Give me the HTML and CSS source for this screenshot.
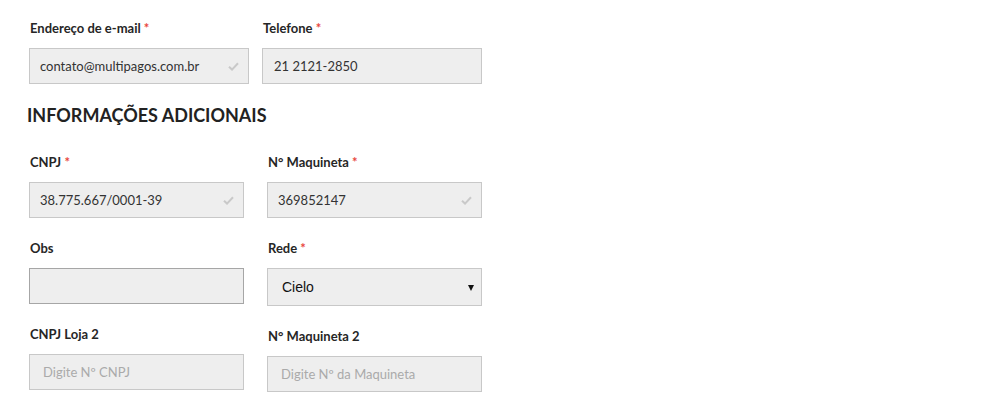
FILE: index.html
```html
<!DOCTYPE html>
<html lang="pt-BR">
<head>
<meta charset="utf-8">
<title>Formulário</title>
<link rel="stylesheet" href="styles.css">
</head>
<body>
<div class="page">
  <div class="row-top">
    <div class="field">
      <label class="lbl">Endereço de e-mail <span class="req">*</span></label>
      <div class="ctrl">
        <input class="inp" type="text" value="contato@multipagos.com.br">
        <svg class="check" width="11" height="9" viewBox="0 0 11 9"><path d="M1 4.8 L4 7.6 L10 1.2" fill="none" stroke="#c9c9c9" stroke-width="2"/></svg>
      </div>
    </div>
    <div class="field">
      <label class="lbl">Telefone <span class="req">*</span></label>
      <div class="ctrl">
        <input class="inp inp-tel" type="text" value="21 2121-2850">
      </div>
    </div>
  </div>

  <h2 class="section-title">INFORMAÇÕES ADICIONAIS</h2>

  <div class="cols">
    <div class="col">
      <div class="field">
        <label class="lbl">CNPJ <span class="req">*</span></label>
        <div class="ctrl">
          <input class="inp" type="text" value="38.775.667/0001-39">
          <svg class="check" width="11" height="9" viewBox="0 0 11 9"><path d="M1 4.8 L4 7.6 L10 1.2" fill="none" stroke="#c9c9c9" stroke-width="2"/></svg>
        </div>
      </div>
      <div class="field">
        <label class="lbl">Obs</label>
        <div class="ctrl">
          <input class="inp inp-dark" type="text" value="">
        </div>
      </div>
      <div class="field">
        <label class="lbl">CNPJ Loja 2</label>
        <div class="ctrl">
          <input class="inp inp-ph" type="text" placeholder="Digite Nº CNPJ">
        </div>
      </div>
    </div>
    <div class="col">
      <div class="field">
        <label class="lbl">N° Maquineta <span class="req">*</span></label>
        <div class="ctrl">
          <input class="inp" type="text" value="369852147">
          <svg class="check" width="11" height="9" viewBox="0 0 11 9"><path d="M1 4.8 L4 7.6 L10 1.2" fill="none" stroke="#c9c9c9" stroke-width="2"/></svg>
        </div>
      </div>
      <div class="field">
        <label class="lbl">Rede <span class="req">*</span></label>
        <div class="ctrl select-wrap">
          <select class="sel">
            <option>Cielo</option>
            <option>Rede</option>
            <option>Stone</option>
          </select>
        </div>
      </div>
      <div class="field">
        <label class="lbl">N° Maquineta 2</label>
        <div class="ctrl">
          <input class="inp inp-ph" type="text" placeholder="Digite Nº da Maquineta">
        </div>
      </div>
    </div>
  </div>
</div>
</body>
</html>
```
FILE: styles.css
```css
html, body {
  margin: 0;
  padding: 0;
  background: #fff;
}
body {
  font-family: Lato, "Liberation Sans", sans-serif;
  color: #333;
}
.page {
  padding: 18px 0 0 29px;
}
.row-top {
  display: grid;
  grid-template-columns: 220px 220px;
  column-gap: 13px;
}
.cols {
  display: grid;
  grid-template-columns: 215px 215px;
  column-gap: 23px;
  align-items: start;
}
.col {
  display: flex;
  flex-direction: column;
}
.field {
  margin-bottom: 20px;
}
.lbl {
  display: block;
  font-size: 13px;
  font-weight: 700;
  line-height: 20px;
  height: 20px;
  margin-bottom: 10px;
  color: #262626;
  padding-left: 1px;
}
.req {
  color: #e8453c;
  font-weight: 700;
}
.ctrl {
  position: relative;
}
.inp {
  display: block;
  box-sizing: border-box;
  width: 100%;
  height: 36px;
  margin: 0;
  padding: 0 10px;
  border: 1px solid #c8c8c8;
  background: #eeeeee;
  font-family: Lato, "Liberation Sans", sans-serif;
  font-size: 13px;
  color: #333;
  outline: none;
}
.inp-tel {
  padding-left: 11px;
}
.inp-ph {
  padding-left: 13px;
}
.inp-dark {
  border-color: #a6a6a6;
}
.inp::placeholder {
  color: #aaaaaa;
  opacity: 1;
}
.check {
  position: absolute;
  right: 10px;
  top: 14px;
}
.section-title {
  margin: 0 0 26px -2px;
  font-size: 18px;
  line-height: 22px;
  font-weight: 700;
  color: #222;
}
.sel {
  display: block;
  box-sizing: border-box;
  width: 100%;
  height: 38px;
  margin: 0;
  padding: 0 14px;
  border: 1px solid #c8c8c8;
  border-radius: 0;
  background: #eeeeee;
  font-family: "Liberation Sans", Arial, sans-serif;
  font-size: 14px;
  color: #111;
  -webkit-appearance: none;
  appearance: none;
  outline: none;
}
.select-wrap::after {
  content: "";
  position: absolute;
  right: 8px;
  top: 17px;
  width: 0;
  height: 0;
  border-left: 3px solid transparent;
  border-right: 3px solid transparent;
  border-top: 6px solid #111;
  pointer-events: none;
}
```
